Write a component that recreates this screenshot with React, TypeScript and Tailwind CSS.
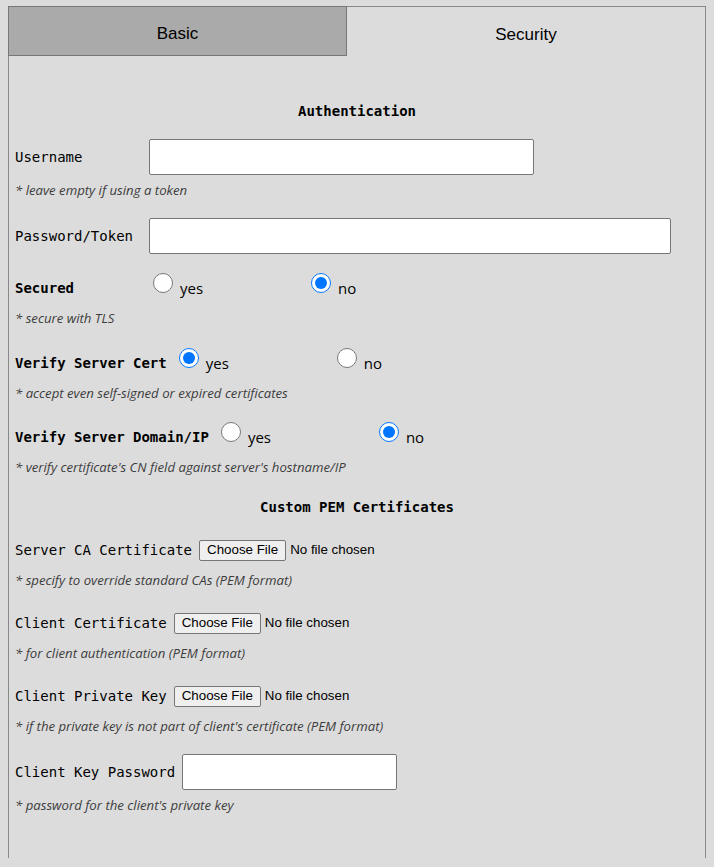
import { useState } from 'react'

const mono = "font-['DejaVu_Sans_Mono',monospace]"
const hintCls = "font-['Open_Sans',sans-serif] italic text-[13.2px] leading-[18px] text-[#3c3c3c]"

function Hint({ children, className = '' }: { children: React.ReactNode; className?: string }) {
  return <div className={`${hintCls} ${className}`}>{children}</div>
}

function RadioRow({
  label,
  name,
  value,
  onChange,
  className = '',
}: {
  label: string
  name: string
  value: boolean
  onChange: (v: boolean) => void
  className?: string
}) {
  return (
    <div className={`flex items-center h-[24px] ${className}`}>
      <span className={`${mono} font-bold text-[14px] min-w-[126px] mr-[8px]`}>{label}</span>
      <label className="flex items-center w-[158px] ml-[4px]">
        <input
          type="radio"
          name={name}
          checked={value}
          onChange={() => onChange(true)}
          className="w-[20px] h-[20px] m-0 mb-[10px] mr-[7px]"
        />
        <span className="font-['Open_Sans',sans-serif] text-[15px]">yes</span>
      </label>
      <label className="flex items-center">
        <input
          type="radio"
          name={name}
          checked={!value}
          onChange={() => onChange(false)}
          className="w-[20px] h-[20px] m-0 mb-[10px] mr-[7px]"
        />
        <span className="font-['Open_Sans',sans-serif] text-[15px]">no</span>
      </label>
    </div>
  )
}

function FileRow({ label, className = '' }: { label: string; className?: string }) {
  return (
    <div className={`flex items-center h-[22px] ${className}`}>
      <span className={`${mono} text-[14px] mr-[7px]`}>{label}</span>
      <span className="font-['Liberation_Sans',Arial,sans-serif] text-[13.333px] h-[21px] px-[7px] flex items-center bg-[#efefef] border border-[#767676] rounded-[2px]">
        Choose File
      </span>
      <span className="font-['Liberation_Sans',Arial,sans-serif] text-[13.333px] ml-[4px]">No file chosen</span>
    </div>
  )
}

export default function App() {
  const [tab, setTab] = useState('security')
  const [secured, setSecured] = useState(false)
  const [verifyCert, setVerifyCert] = useState(true)
  const [verifyDomain, setVerifyDomain] = useState(false)

  return (
    <div className="min-h-[867px] bg-[#dcdcdc] text-black pt-[6px] px-[8px] pb-[9px]">
      <div className="flex h-[50px] font-['Liberation_Sans',Arial,sans-serif] text-[17px]">
        <button
          onClick={() => setTab('basic')}
          className="w-[339px] pt-[6px] bg-[#aaaaaa] border border-[#777]"
        >
          Basic
        </button>
        <button
          onClick={() => setTab('security')}
          className="flex-1 pt-[6px] border-t border-r border-[#888]"
        >
          Security
        </button>
      </div>

      <div className="h-[802px] border-l border-r border-[#888] px-[6px]">
        {tab === 'security' && (
          <div className="flex flex-col">
            <div className={`${mono} font-bold text-[14px] leading-[20px] text-center mt-[45px]`}>Authentication</div>

            <div className="flex items-center mt-[18px]">
              <span className={`${mono} text-[14px] min-w-[126px] mr-[8px]`}>Username</span>
              <input type="text" className="w-[385px] h-[36px] bg-white border border-[#767676] rounded-[2px] px-2" />
            </div>
            <Hint className="mt-[6px]">* leave empty if using a token</Hint>

            <div className="flex items-center mt-[19px]">
              <span className={`${mono} text-[14px] min-w-[126px] mr-[8px]`}>Password/Token</span>
              <input type="password" className="w-[522px] h-[36px] bg-white border border-[#767676] rounded-[2px] px-2" />
            </div>

            <RadioRow label="Secured" name="secured" value={secured} onChange={setSecured} className="mt-[22px]" />
            <Hint className="mt-[9px]">* secure with TLS</Hint>

            <RadioRow label="Verify Server Cert" name="verifyCert" value={verifyCert} onChange={setVerifyCert} className="mt-[24px]" />
            <Hint className="mt-[9px]">* accept even self-signed or expired certificates</Hint>

            <RadioRow label="Verify Server Domain/IP" name="verifyDomain" value={verifyDomain} onChange={setVerifyDomain} className="mt-[23px]" />
            <Hint className="mt-[9px]">* verify certificate's CN field against server's hostname/IP</Hint>

            <div className={`${mono} font-bold text-[14px] leading-[20px] text-center mt-[21px]`}>Custom PEM Certificates</div>

            <FileRow label="Server CA Certificate" className="mt-[22px]" />
            <Hint className="mt-[10px]">* specify to override standard CAs (PEM format)</Hint>

            <FileRow label="Client Certificate" className="mt-[23px]" />
            <Hint className="mt-[10px]">* for client authentication (PEM format)</Hint>

            <FileRow label="Client Private Key" className="mt-[23px]" />
            <Hint className="mt-[10px]">* if the private key is not part of client's certificate (PEM format)</Hint>

            <div className="flex items-center mt-[19px]">
              <span className={`${mono} text-[14px] min-w-[126px] mr-[7px]`}>Client Key Password</span>
              <input type="password" className="w-[215px] h-[36px] bg-white border border-[#767676] rounded-[2px] px-2" />
            </div>
            <Hint className="mt-[6px]">* password for the client's private key</Hint>
          </div>
        )}
      </div>
    </div>
  )
}
